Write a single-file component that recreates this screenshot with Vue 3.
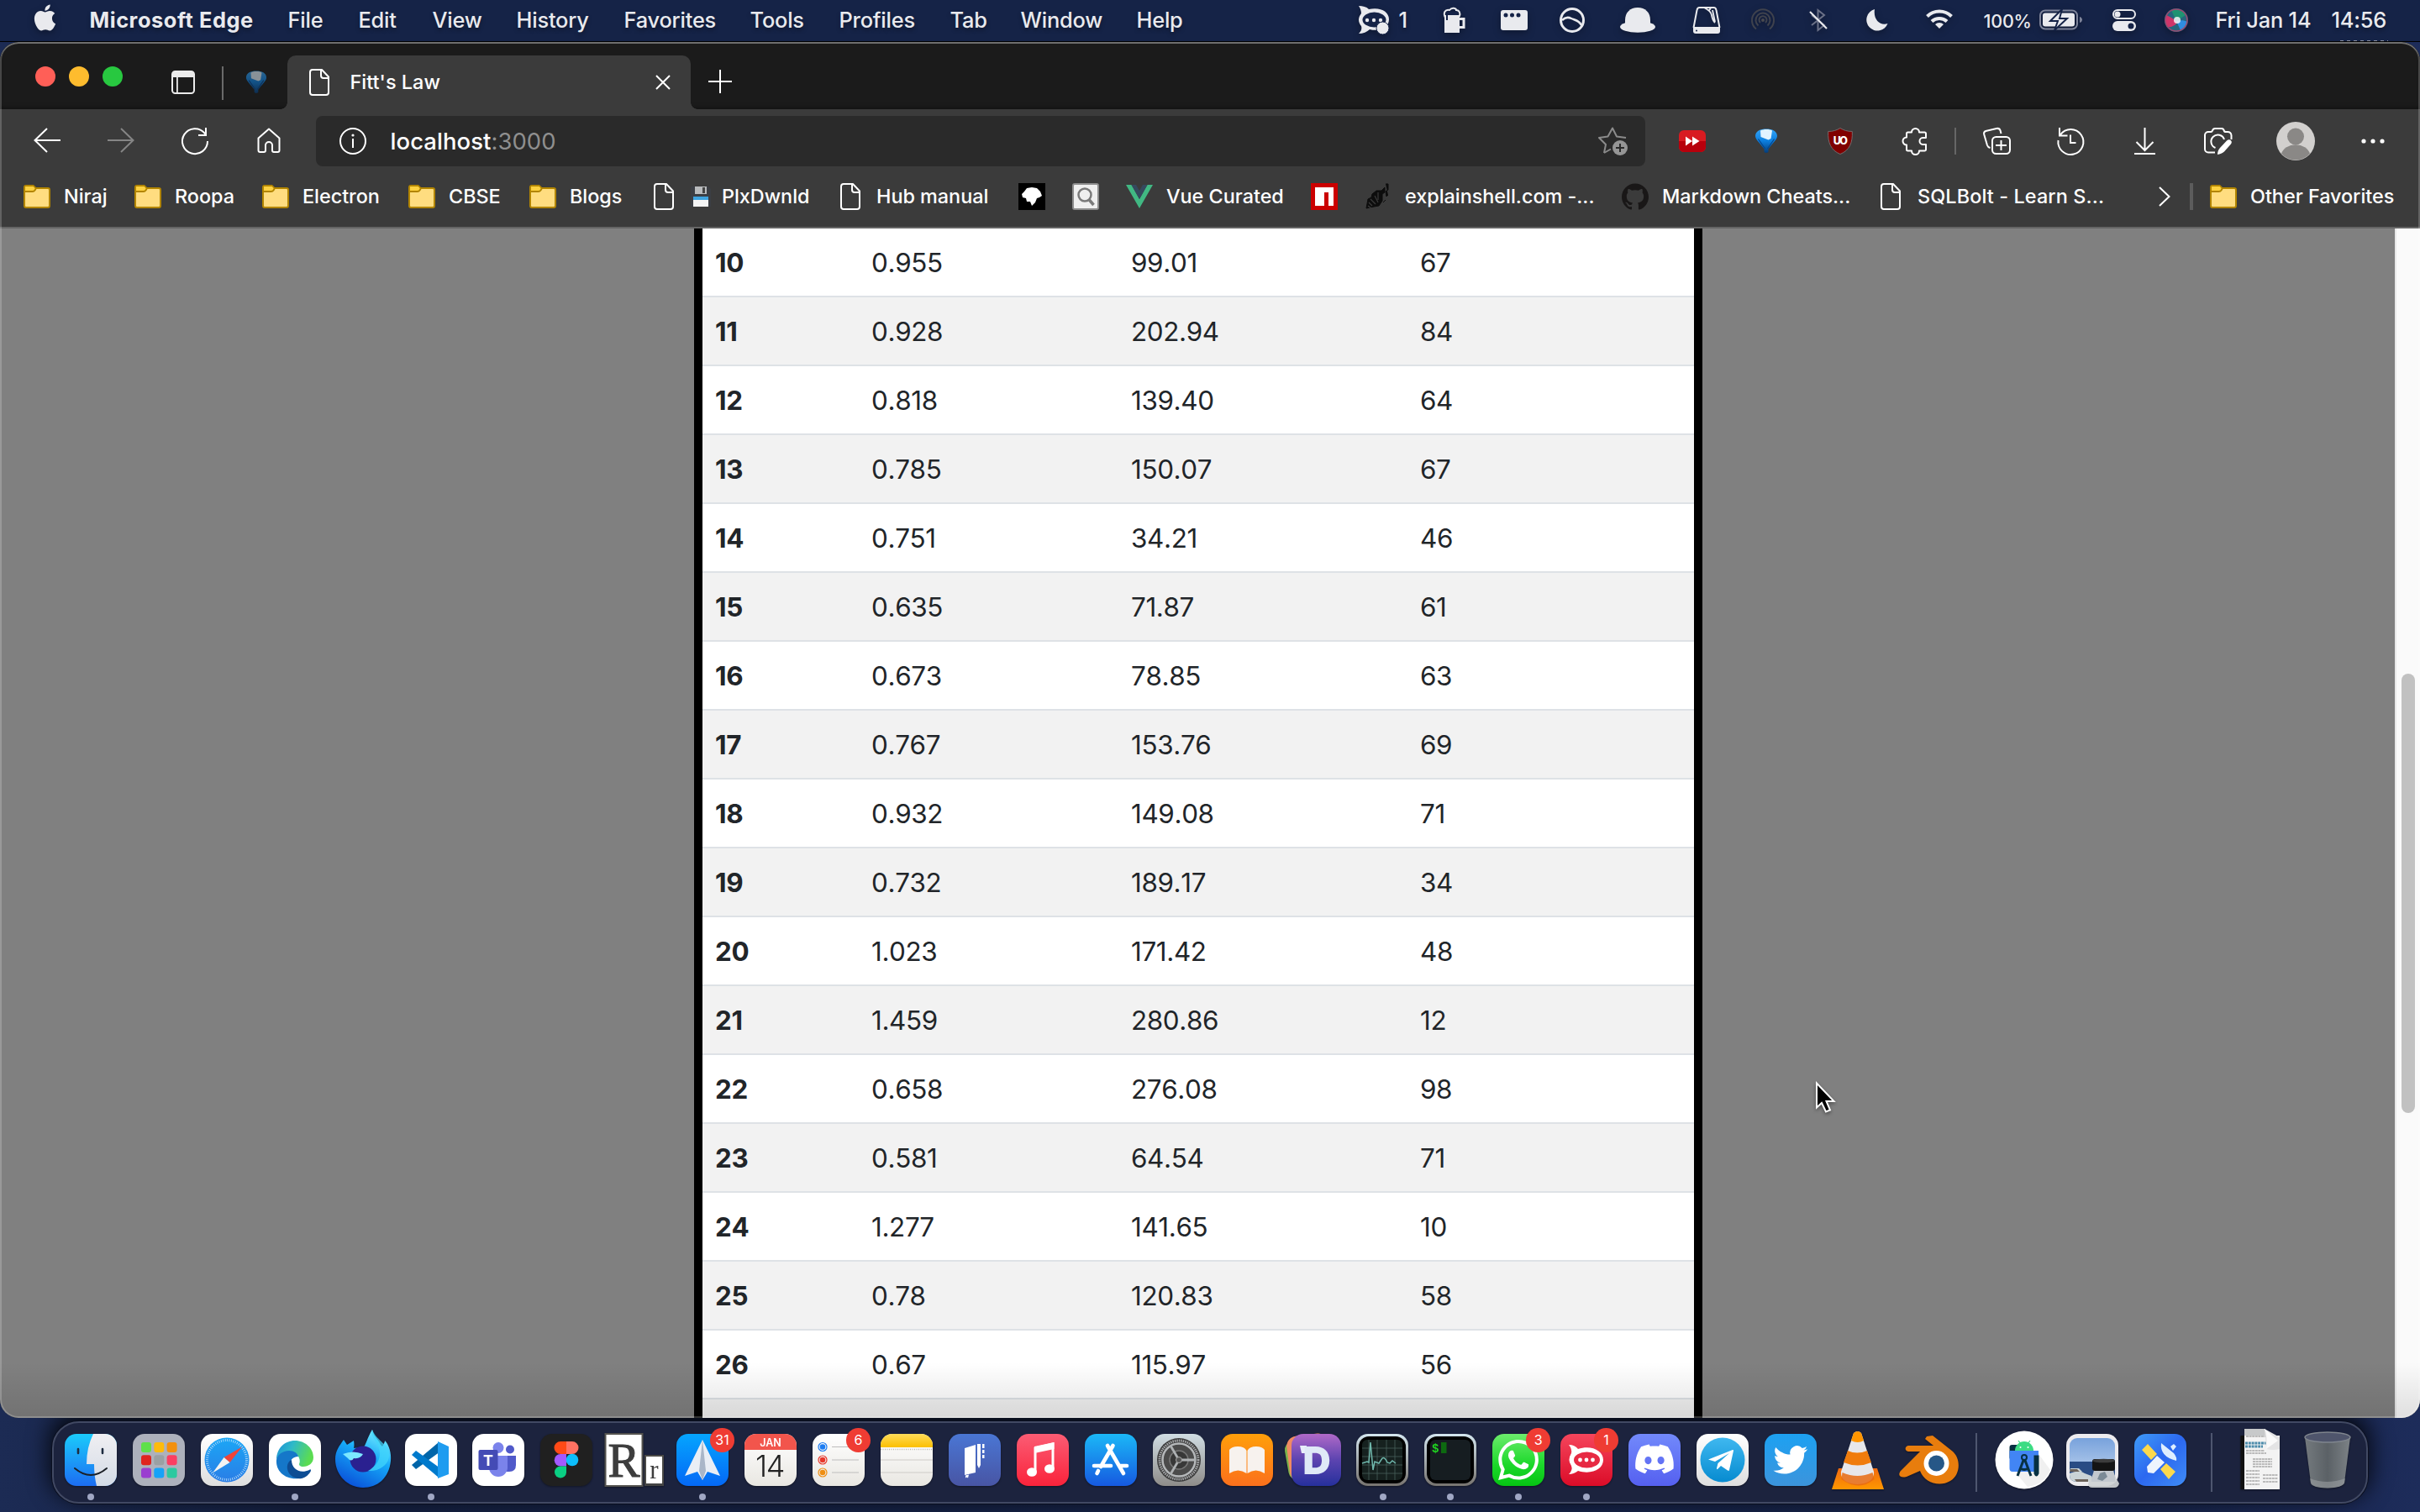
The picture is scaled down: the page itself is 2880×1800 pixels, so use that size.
<script setup>
const menus = ['Microsoft Edge', 'File', 'Edit', 'View', 'History', 'Favorites', 'Tools', 'Profiles', 'Tab', 'Window', 'Help']

const rows = [
  [10, '0.955', '99.01', 67],
  [11, '0.928', '202.94', 84],
  [12, '0.818', '139.40', 64],
  [13, '0.785', '150.07', 67],
  [14, '0.751', '34.21', 46],
  [15, '0.635', '71.87', 61],
  [16, '0.673', '78.85', 63],
  [17, '0.767', '153.76', 69],
  [18, '0.932', '149.08', 71],
  [19, '0.732', '189.17', 34],
  [20, '1.023', '171.42', 48],
  [21, '1.459', '280.86', 12],
  [22, '0.658', '276.08', 98],
  [23, '0.581', '64.54', 71],
  [24, '1.277', '141.65', 10],
  [25, '0.78', '120.83', 58],
  [26, '0.67', '115.97', 56],
]

const folders = ['Niraj', 'Roopa', 'Electron', 'CBSE', 'Blogs']
const launchpad = ['#5fe04a', '#fdbb0c', '#f3900d', '#e0241f', '#9aa0a3', '#fb3f62', '#9a3fd0', '#16a2f8', '#2cc9a0']
</script>

<template>
  <div class="desktop">
    <svg class="defs" width="0" height="0">
      <defs>
        <linearGradient id="balloon" x1="0" y1="0" x2="0" y2="1"><stop offset="0" stop-color="#35a4f5" /><stop offset=".5" stop-color="#0c7fe0" /><stop offset="1" stop-color="#053c78" /></linearGradient>
        <symbol id="i-doc" viewBox="0 0 24 32"><path d="M4 1h11l8 8.500v18.500a3 3 0 0 1-3 3H4a3 3 0 0 1-3-3V4a3 3 0 0 1 3-3zM14 1v7a3 3 0 0 0 3 3h6" fill="none" stroke="#fff" stroke-width="2" stroke-linejoin="round" /></symbol>
        <symbol id="i-folder" viewBox="0 0 32 28">
          <path d="M1 6V3a2 2 0 0 1 2-2h8.500l3 3H29a2 2 0 0 1 2 2v19a2 2 0 0 1-2 2H3a2 2 0 0 1-2-2z" fill="#ffdd80" stroke="#b28500" stroke-width="2" />
          <path d="M2 2h9.500l2.500 2.500L11.500 8H2z" fill="#fdd140" />
          <path d="M2 8h8.500q2 0 3-1.500L15 4" fill="none" stroke="#b28500" stroke-width="2" />
        </symbol>
        <symbol id="i-balloon" viewBox="0 0 28 30">
          <path d="M1 9C1 3 7 .5 14 .5S27 3 27 9c0 4-6 9-10.500 15.500V28q-2.500 2-5 0v-3.500C7 18 1 13 1 9z" fill="url(#balloon)" />
          <path d="M7 2.500C11 .5 18 .5 21 2.500L19.500 12l-3 1.500L7.500 10z" fill="#e2f3ff" />
          <path d="M4.500 12.500l8 11.500M23.500 12.500l-8 11.500" stroke="#06468c" stroke-width="1.200" fill="none" />
        </symbol>
        <linearGradient id="g-finder" x1="0" y1="0" x2="0" y2="1"><stop offset="0" stop-color="#1bcbfb" /><stop offset="1" stop-color="#1c6df2" /></linearGradient>
        <linearGradient id="g-face" x1="0" y1="0" x2="0" y2="1"><stop offset="0" stop-color="#f0eff2" /><stop offset="1" stop-color="#d3dbe6" /></linearGradient>
        <linearGradient id="g-white" x1="0" y1="0" x2="0" y2="1"><stop offset="0" stop-color="#fff" /><stop offset="1" stop-color="#dedede" /></linearGradient>
        <linearGradient id="g-safari" x1="0" y1="0" x2="0" y2="1"><stop offset="0" stop-color="#1ba7f6" /><stop offset="1" stop-color="#2a7de6" /></linearGradient>
        <linearGradient id="g-edge" x1="0" y1="0" x2="1" y2=".3"><stop offset="0" stop-color="#1b8fd6" /><stop offset=".45" stop-color="#2fb9c8" /><stop offset="1" stop-color="#5bdc52" /></linearGradient>
        <linearGradient id="g-fox" x1="0.800" y1="0" x2=".3" y2="1"><stop offset="0" stop-color="#7ff3ff" /><stop offset=".45" stop-color="#15a8f8" /><stop offset="1" stop-color="#0a50d8" /></linearGradient>
        <linearGradient id="g-spark" x1="0" y1="0" x2="0" y2="1"><stop offset="0" stop-color="#05a5ff" /><stop offset="1" stop-color="#0468f5" /></linearGradient>
        <linearGradient id="g-notes" x1="0" y1="0" x2="0" y2="1"><stop offset="0" stop-color="#ffdc5a" /><stop offset="1" stop-color="#fbbf00" /></linearGradient>
        <linearGradient id="g-paper" x1="0" y1="0" x2="0" y2="1"><stop offset="0" stop-color="#fff" /><stop offset="1" stop-color="#e9e7e2" /></linearGradient>
        <linearGradient id="g-indigo" x1="0" y1="0" x2="0" y2="1"><stop offset="0" stop-color="#4a76d4" /><stop offset="1" stop-color="#4855a4" /></linearGradient>
        <linearGradient id="g-music" x1="0" y1="0" x2="0" y2="1"><stop offset="0" stop-color="#fb5c74" /><stop offset="1" stop-color="#fa233b" /></linearGradient>
        <linearGradient id="g-store" x1="0" y1="0" x2="0" y2="1"><stop offset="0" stop-color="#1bb8f7" /><stop offset="1" stop-color="#1659e0" /></linearGradient>
        <linearGradient id="g-prefs" x1="0" y1="0" x2="0" y2="1"><stop offset="0" stop-color="#d0dde3" /><stop offset="1" stop-color="#8e8c89" /></linearGradient>
        <linearGradient id="g-books" x1="0" y1="0" x2="0" y2="1"><stop offset="0" stop-color="#ff9f0a" /><stop offset="1" stop-color="#fb701c" /></linearGradient>
        <linearGradient id="g-dash" x1="0" y1="0" x2="0" y2="1"><stop offset="0" stop-color="#b069c8" /><stop offset=".5" stop-color="#5c44b0" /><stop offset="1" stop-color="#26309c" /></linearGradient>
        <linearGradient id="g-rim" x1="0" y1="0" x2="0" y2="1"><stop offset="0" stop-color="#d3e5ee" /><stop offset="1" stop-color="#77736f" /></linearGradient>
        <linearGradient id="g-wa" x1="0" y1="0" x2="0" y2="1"><stop offset="0" stop-color="#6cec6c" /><stop offset=".6" stop-color="#1bd82a" /><stop offset="1" stop-color="#06c413" /></linearGradient>
        <linearGradient id="g-rocket" x1="0" y1="0" x2="0" y2="1"><stop offset="0" stop-color="#f5455c" /><stop offset="1" stop-color="#db0c28" /></linearGradient>
        <linearGradient id="g-discord" x1="0" y1="0" x2="0" y2="1"><stop offset="0" stop-color="#7289fb" /><stop offset="1" stop-color="#5560f0" /></linearGradient>
        <linearGradient id="g-tele" x1="0" y1="0" x2="0" y2="1"><stop offset="0" stop-color="#3fb8f0" /><stop offset="1" stop-color="#078bd0" /></linearGradient>
        <linearGradient id="g-twit" x1="0" y1="0" x2="0" y2="1"><stop offset="0" stop-color="#1da1f2" /><stop offset="1" stop-color="#3c94dc" /></linearGradient>
        <linearGradient id="g-cone" x1="0" y1="0" x2="0" y2="1"><stop offset="0" stop-color="#f06a10" /><stop offset="1" stop-color="#ff9700" /></linearGradient>
        <linearGradient id="g-sky" x1="0" y1="0" x2="0" y2="1"><stop offset="0" stop-color="#78a2dc" /><stop offset="1" stop-color="#c5d8f0" /></linearGradient>
        <linearGradient id="g-clean" x1="0" y1="0" x2="1" y2="1"><stop offset="0" stop-color="#3f9cf8" /><stop offset=".5" stop-color="#2c68f0" /><stop offset="1" stop-color="#3f8cf5" /></linearGradient>
        <linearGradient id="g-bin" x1="0" y1="0" x2="1" y2="0"><stop offset="0" stop-color="#747a7e" /><stop offset=".5" stop-color="#5b6166" /><stop offset="1" stop-color="#7c8286" /></linearGradient>
      </defs>
    </svg>

    <header class="menubar">
      <svg class="apple" width="31" height="32" viewBox="0 0 24 24"><path fill="#e9eaee" d="M12.152 6.896c-.948 0-2.415-1.078-3.960-1.040-2.040.027-3.910 1.183-4.961 3.014-2.117 3.675-.546 9.103 1.519 12.090 1.013 1.454 2.208 3.090 3.792 3.039 1.520-.065 2.090-.987 3.935-.987 1.831 0 2.350.987 3.960.948 1.637-.026 2.676-1.480 3.676-2.948 1.156-1.688 1.636-3.325 1.662-3.415-.039-.013-3.182-1.221-3.220-4.857-.026-3.040 2.480-4.494 2.597-4.559-1.429-2.090-3.623-2.324-4.390-2.376-2-.156-3.675 1.090-4.610 1.090zM15.530 3.830c.843-1.012 1.400-2.427 1.245-3.830-1.207.052-2.662.805-3.532 1.818-.780.896-1.454 2.338-1.273 3.714 1.338.104 2.715-.688 3.559-1.701" /></svg>
      <span v-for="(m, i) in menus" :key="m" class="menu" :class="{ strong: i === 0 }">{{ m }}</span>
      <svg width="38" height="34" viewBox="0 0 38 34"><path d="M0 0c5 0 9 1 12 4 14-3 24 3 24 12 0 10-11 15-23 12-3 3-8 5-13 5 3-3 4-6 3-9-4-5-4-10 0-15C3 6 2 3 0 0z" fill="#e9eaee" /><ellipse cx="18.500" cy="16.500" rx="14" ry="9" fill="#152347" /><circle cx="10" cy="17" r="2.200" fill="#e9eaee" /><circle cx="18" cy="17" r="2.200" fill="#e9eaee" /><circle cx="26" cy="17" r="2.200" fill="#e9eaee" /><circle cx="28.500" cy="26.500" r="7.500" fill="#e9eaee" stroke="#152347" stroke-width="1" /></svg>
      <span class="menu">1</span>
      <svg width="26" height="30" viewBox="0 0 26 30"><path d="M1 9h18v21H1z" fill="#e9eaee" /><path d="M2 12C-1 6 2 2 7 3c3-4 8-2 8 0 4 0 5 4 4 7H6z" fill="none" stroke="#e9eaee" stroke-width="2" /><path d="M3 5h14v4H5v6H3z" fill="#152347" /><path d="M19 13.500h5v10h-5" fill="none" stroke="#e9eaee" stroke-width="3" /></svg>
      <svg width="32" height="24" viewBox="0 0 32 24"><rect width="32" height="24" rx="3" fill="#e9eaee" /><circle cx="6" cy="6" r="2.500" fill="#152347" /><circle cx="13.500" cy="6" r="2.500" fill="#152347" /><circle cx="21" cy="6" r="2.500" fill="#152347" /></svg>
      <svg width="30" height="30" viewBox="0 0 30 30" fill="none" stroke="#e9eaee"><circle cx="15" cy="15" r="13.500" stroke-width="3" /><path d="M3 15c3-3 7-4 11-2s9 2 12 8" stroke-width="2.500" /></svg>
      <svg width="42" height="30" viewBox="0 0 42 30" fill="#e9eaee"><path d="M6 22V15C6 6 12 0 21 0s15 6 15 15v7z" /><ellipse cx="21" cy="23" rx="21" ry="6.800" /></svg>
      <svg width="34" height="32" viewBox="0 0 34 32" fill="none" stroke="#e9eaee"><path d="M1.500 25L5.500 4q.5-3 3-3h17q2.500 0 3 3l4 21" stroke-width="2" /><path d="M1 24h32v5a3 3 0 0 1-3 3H4a3 3 0 0 1-3-3z" fill="#e9eaee" stroke="none" /><path d="M14 1q8 4 9 9 1 6 4 9M24 4l3 14M19 5l3-3" stroke-width="1.800" /><circle cx="5" cy="28.500" r="1" fill="#152347" stroke="none" /></svg>
      <svg width="28" height="28" viewBox="0 0 28 28" fill="none" stroke="#3f424d" stroke-width="2"><path d="M6 24.500A13 13 0 1 1 22 24.500M8.500 20.500a8.500 8.500 0 1 1 11 0M11 17a4.500 4.500 0 1 1 6 0" /><circle cx="14" cy="14" r="2" fill="#4a4a50" stroke="none" /></svg>
      <svg width="22" height="28" viewBox="0 0 22 28" fill="none"><path d="M2 8l15 12-7.500 6V2L17 8 2 20" stroke="#6c7288" stroke-width="2" /><path d="M0 4l20 20" stroke="#e9eaee" stroke-width="2.200" /></svg>
      <svg width="26" height="26" viewBox="0 0 26 26"><path d="M10 0A13 13 0 1 0 25.500 17C17 20 8 13 10 0z" fill="#e9eaee" /></svg>
      <svg class="up" width="32" height="25" viewBox="0 0 32 25" fill="none" stroke="#e9eaee" stroke-width="4"><path d="M1.500 9.500a20.500 20.500 0 0 1 29 0M7 15.500a13 13 0 0 1 18 0" /><path d="M16 24l5-5a7 7 0 0 0-10 0z" fill="#e9eaee" stroke="none" /></svg>
      <span class="menu small">100%</span>
      <svg width="52" height="26" viewBox="0 0 52 26"><rect x="1" y="1.500" width="44" height="22" rx="6" fill="none" stroke="#7d8399" stroke-width="2" /><rect x="4" y="4.500" width="38" height="16" rx="3" fill="#e9eaee" /><path d="M48 9c4 1 4 6 0 7z" fill="#7d8399" /><path d="M27 0L13 14h9l-4 11 15-14h-9z" fill="#e9eaee" stroke="#152347" stroke-width="2" /></svg>
      <svg width="28" height="26" viewBox="0 0 28 26"><rect x="1" y="1" width="26" height="10" rx="5" fill="none" stroke="#e9eaee" stroke-width="2" /><circle cx="6" cy="6" r="3.500" fill="#e9eaee" /><rect y="14" width="28" height="12" rx="6" fill="#e9eaee" /><circle cx="22" cy="20" r="3.500" fill="#152347" /></svg>
      <svg width="28" height="28" viewBox="0 0 28 28"><circle cx="14" cy="14" r="14" fill="#27667e" /><path d="M2 8c5 2 10 5 13 9-3 4-8 6-12 5A14 14 0 0 1 2 8z" fill="#d0356a" /><path d="M8 2c6-2 14 0 17 6-4 3-8 5-12 5z" fill="#1f9372" /><path d="M14 15c5-1 10-1 13 1-1 4-4 8-8 10z" fill="#2f8de0" /><circle cx="15" cy="14" r="4" fill="#fff" opacity=".8" /><circle cx="14" cy="14" r="13" fill="none" stroke="#9a4a70" stroke-width="1.500" /></svg>
      <span class="menu">Fri Jan 14</span>
      <span class="menu">14:56</span>
    </header>

    <main class="window">
      <div class="tabstrip">
        <div class="lights"><i class="red"></i><i class="amber"></i><i class="green"></i></div>
        <svg class="panel" width="28" height="28" viewBox="0 0 28 28"><rect x="1" y="1" width="26" height="26" rx="3.500" fill="none" stroke="#ebebeb" stroke-width="2" /><path d="M1 2h26v6H1zM6 8h1.800v19H6z" fill="#ebebeb" /></svg>
        <i class="rule"></i>
        <svg class="dim" width="26" height="28"><use href="#i-balloon" /></svg>
        <div class="tab">
          <svg width="24" height="32"><use href="#i-doc" /></svg>
          <span class="title">Fitt's Law</span>
          <svg width="18" height="18" viewBox="0 0 18 18"><path d="M1 1l16 16M17 1L1 17" stroke="#fff" stroke-width="2" /></svg>
        </div>
        <svg class="plus" width="28" height="28" viewBox="0 0 28 28"><path d="M14 0v28M0 14h28" stroke="#fff" stroke-width="2" /></svg>
      </div>

      <div class="toolbar">
        <svg width="32" height="32" viewBox="0 0 32 32" fill="none" stroke="#fff" stroke-width="2"><path d="M32 15H1.500M16 1L1.500 15 16 29" /></svg>
        <svg width="32" height="32" viewBox="0 0 32 32" fill="none" stroke="#858585" stroke-width="2"><path d="M0 15h30.500M16 1l14.500 14L16 29" /></svg>
        <svg width="32" height="32" viewBox="0 0 32 32" fill="none" stroke="#fff" stroke-width="2"><path d="M31 16A15 15 0 1 1 27.500 6.500L29 9M29 0v9h-9" /></svg>
        <svg width="28" height="32" viewBox="0 0 28 32" fill="none" stroke="#fff" stroke-width="2"><path d="M14 1.500L1.500 12.500V27a2 2 0 0 0 2 2H8q2 0 2-2v-6a4 4 0 0 1 8 0v6q0 2 2 2h4.500a2 2 0 0 0 2-2V12.500z" stroke-linejoin="round" /></svg>
        <div class="address">
          <svg width="32" height="32" viewBox="0 0 32 32" fill="none" stroke="#fff" stroke-width="2"><circle cx="16" cy="16" r="15" /><path d="M16 13v11" /><circle cx="16" cy="9" r="1.600" fill="#fff" stroke="none" /></svg>
          <span class="url">localhost<em>:3000</em></span>
          <svg width="36" height="34" viewBox="0 0 36 34"><path d="M7 31l2-10-8-8 10.500-1.500L17 1.500l5 10L33 13" fill="none" stroke="#8b8b8b" stroke-width="2" stroke-linejoin="round" /><path d="M7 31l8-4.500" stroke="#8b8b8b" stroke-width="2" /><circle cx="26" cy="25" r="9" fill="#959595" /><path d="M26 20v10M21 25h10" stroke="#2a2a2a" stroke-width="2" /></svg>
        </div>
        <svg width="32" height="26" viewBox="0 0 32 26"><rect width="32" height="26" rx="6" fill="#d81b21" /><path d="M0 13h32v7a6 6 0 0 1-6 6H6a6 6 0 0 1-6-6z" fill="#b8000c" /><path d="M8 7.500l8 5.500-8 5.500zM16 7.500l8.500 5.500-8.500 5.500z" fill="#fff" /></svg>
        <svg width="28" height="30"><use href="#i-balloon" /></svg>
        <svg width="30" height="32" viewBox="0 0 30 32"><path d="M15 .5c4 2.500 8.500 4 14.300 4C30 18 26 27 15 31.500 4 27 0 18 .7 4.500 6.500 4.500 11 3 15 .5z" fill="#800000" stroke="#75686a" stroke-width="1" /><text x="14.500" y="20" text-anchor="middle" font-size="12.500" font-weight="800" font-family="Inter, sans-serif" fill="#fff" letter-spacing="-1.500">UO</text></svg>
        <svg width="30" height="32" viewBox="0 0 30 32" fill="none" stroke="#fff" stroke-width="2" stroke-linejoin="round"><path d="M6.500 5.500H11a4.500 4.500 0 0 1 9 0h6.500a1.500 1.500 0 0 1 1.500 1.500v5h-3.500a4 4 0 0 0 0 8H28v6a1.500 1.500 0 0 1-1.500 1.500H20a4.500 4.500 0 0 1-9 0H6.500A1.500 1.500 0 0 1 5 26v-5.500a4.500 4.500 0 0 1 0-9V7a1.500 1.500 0 0 1 1.500-1.500z" /></svg>
        <i class="sep"></i>
        <svg width="33" height="32" viewBox="0 0 33 32" fill="none" stroke="#fff" stroke-width="2"><rect x="11" y="11" width="21" height="20" rx="4.500" /><path d="M21.500 15v12M15 21h13" /><path d="M8.500 24c-2-.5-3-1.500-3.500-3L1.200 8c-.5-2 .5-3.500 2-4L16 1c2.500-.5 4 .5 4.600 2.500L21.500 7" /></svg>
        <svg width="33" height="32" viewBox="0 0 33 32" fill="none" stroke="#fff" stroke-width="2"><path d="M1.500 15A15 15 0 1 0 4 8.500L3 10M3 0v9.500h9.500M16 8.500V18h6.500" /></svg>
        <svg width="25" height="32" viewBox="0 0 25 32" fill="none" stroke="#fff" stroke-width="2"><path d="M12.500 0v26M2.500 17l10 10 10-10M0 31h25" /></svg>
        <svg width="34" height="32" viewBox="0 0 34 32" fill="none" stroke="#fff" stroke-width="2"><path d="M13 29.500H5a4 4 0 0 1-4-4V9a4 4 0 0 1 4-4h3q1.500 0 2-1.500Q10.800 1 13 1h8q2 0 2.800 2.500Q24 5 26 5h2q4 0 4.500 4v5M13.500 24a8 8 0 1 1 10.500-10" /><path d="M31 14.500c2 1 2.500 3 1 5l-8 9c-2 2-5 3-8 3.500 0-3 1-6 3-8l8-8.500q2-2 4-1z" fill="#fff" stroke="none" /></svg>
        <svg width="46" height="46" viewBox="0 0 46 46"><circle cx="23" cy="23" r="23" fill="#d2d0ce" /><circle cx="23" cy="17.500" r="10" fill="#8a8886" /><path d="M6 38a17.500 14 0 0 1 34 0 23 23 0 0 1-34 0z" fill="#8a8886" /></svg>
        <svg width="28" height="6" viewBox="0 0 28 6" fill="#fff"><circle cx="3" cy="3" r="2.600" /><circle cx="14" cy="3" r="2.600" /><circle cx="25" cy="3" r="2.600" /></svg>
      </div>

      <nav class="bookmarks">
        <template v-for="f in folders" :key="f"><svg width="32" height="28"><use href="#i-folder" /></svg><span>{{ f }}</span></template>
        <svg width="24" height="32"><use href="#i-doc" /></svg>
        <svg width="24" height="24" viewBox="0 0 24 24"><path d="M1 0h20l3 3v21H0V1z" fill="#3b3e44" /><path d="M5 0h14v9H5z" fill="#b9bbbd" /><path d="M14 1h3v7h-3z" fill="#444" /><path d="M3 12h18v4H3z" fill="#3fa4e0" /><path d="M3 16h18v8H3z" fill="#f4f4f4" /></svg>
        <span>PlxDwnld</span>
        <svg width="24" height="32"><use href="#i-doc" /></svg><span>Hub manual</span>
        <svg width="32" height="32" viewBox="0 0 32 32"><path d="M0 0h32v32H0z" fill="#000" /><path d="M4 13l3-3 3-4 6-1 6 1 4 4 2 5-3 2-3 1-2 5-4 4-2-5-4 0-1-4-4-1z" fill="#fff" /></svg>
        <svg width="32" height="32" viewBox="0 0 32 32"><rect x="1" y="1" width="30" height="30" rx="2" fill="#efefef" stroke="#8d8d8d" stroke-width="2" /><circle cx="15" cy="14" r="7.500" fill="none" stroke="#7a7a7a" stroke-width="2.500" /><path d="M19.500 19l6 7" stroke="#7a7a7a" stroke-width="3.500" /></svg>
        <svg width="32" height="28" viewBox="0 0 32 28"><path d="M0 0h6.500L16 17 25.500 0H32L16 28z" fill="#41b883" /><path d="M6.500 0H12l4 7 4-7h5.500L16 17z" fill="#35495e" /></svg>
        <span>Vue Curated</span>
        <svg width="32" height="32" viewBox="0 0 32 32"><path d="M0 0h32v32H0z" fill="#cb0000" /><path d="M5 5h22v22h-6V11h-5v16H5z" fill="#fff" /></svg>
        <svg width="27" height="30" viewBox="0 0 27 30"><path d="M23 0h3v7l-3 2 1 6 2-2M0 29l2-11 4-2 1-4 5-4h6l4-4v6l-3 2v8l-4 6-6 1zM20 22l3-3" fill="#0d0d0d" stroke="#0d0d0d" /><path d="M3 22l4 4M5 18l6 6M10 14l4 8M14 10v9M2 26l4 3" stroke="#3b3b3b" stroke-width="1.200" /></svg>
        <span>explainshell.com -...</span>
        <svg width="32" height="32" viewBox="0 0 24 24"><path fill="#191717" d="M12 .297c-6.630 0-12 5.373-12 12 0 5.303 3.438 9.800 8.205 11.385.600.113.820-.258.820-.577 0-.285-.010-1.040-.015-2.040-3.338.724-4.042-1.610-4.042-1.610C4.422 18.070 3.633 17.700 3.633 17.700c-1.087-.744.084-.729.084-.729 1.205.084 1.838 1.236 1.838 1.236 1.070 1.835 2.809 1.305 3.495.998.108-.776.417-1.305.760-1.605-2.665-.300-5.466-1.332-5.466-5.930 0-1.310.465-2.380 1.235-3.220-.135-.303-.540-1.523.105-3.176 0 0 1.005-.322 3.300 1.230.960-.267 1.980-.399 3-.405 1.020.006 2.040.138 3 .405 2.280-1.552 3.285-1.230 3.285-1.230.645 1.653.240 2.873.120 3.176.765.840 1.230 1.910 1.230 3.220 0 4.610-2.805 5.625-5.475 5.920.420.360.810 1.096.810 2.220 0 1.606-.015 2.896-.015 3.286 0 .315.210.690.825.570C20.565 22.092 24 17.592 24 12.297c0-6.627-5.373-12-12-12" /></svg>
        <span>Markdown Cheats...</span>
        <svg width="24" height="32"><use href="#i-doc" /></svg><span class="loose">SQLBolt - Learn S...</span>
        <svg width="14" height="24" viewBox="0 0 14 24"><path d="M1 1l11.500 11L1 23" fill="none" stroke="#fff" stroke-width="2" /></svg>
        <i class="rule"></i>
        <svg width="32" height="28"><use href="#i-folder" /></svg><span>Other Favorites</span>
      </nav>

      <section class="page">
        <div class="sheet">
          <table>
            <colgroup><col class="c1" /><col class="c2" /><col class="c3" /><col /></colgroup>
            <tbody>
              <tr v-for="r in rows" :key="r[0]"><th>{{ r[0] }}</th><td>{{ r[1] }}</td><td>{{ r[2] }}</td><td>{{ r[3] }}</td></tr>
              <tr><td></td><td></td><td></td><td></td></tr>
            </tbody>
          </table>
        </div>
        <div class="track"><i class="thumb"></i></div>
        <svg class="pointer" width="28" height="40" viewBox="0 0 28 40"><path d="M2 1.500v29l6-5.500 5 10.500 5-2-4.500-10.500h9z" fill="#000" stroke="#fff" stroke-width="2" /></svg>
      </section>
    </main>

    <footer class="dock">
      <div class="app on"><svg viewBox="0 0 62 62"><rect width="62" height="62" rx="14" fill="url(#g-finder)" /><path d="M34 0h14a14 14 0 0 1 14 14v34a14 14 0 0 1-14 14H38q-3-12-3-26h-9Q26 16 34 0z" fill="url(#g-face)" /><path d="M16 18v5M45 18v5" stroke="#1e2c40" stroke-width="2.600" stroke-linecap="round" /><path d="M12 41q19 16 38 0" fill="none" stroke="#1b2027" stroke-width="2" stroke-linecap="round" /></svg></div>
      <div class="app"><svg viewBox="0 0 62 62"><rect width="62" height="62" rx="14" fill="#adb1bc" /><rect v-for="(c, i) in launchpad" :key="c" :x="10 + (i % 3) * 15.3" :y="10 + Math.floor(i / 3) * 15.3" width="12" height="12" rx="3" :fill="c" /></svg></div>
      <div class="app"><svg viewBox="0 0 62 62"><rect width="62" height="62" rx="14" fill="url(#g-white)" /><circle cx="31" cy="31" r="26.500" fill="url(#g-safari)" /><circle cx="31" cy="31" r="23.500" fill="none" stroke="#bfe0fa" stroke-width="3" stroke-dasharray=".8 1.650" /><path d="M49 15.500L34.500 34l-7-6z" fill="#f1443a" /><path d="M14 46.500L27.500 28l7 6z" fill="#f3f3f3" /></svg></div>
      <div class="app on"><svg viewBox="0 0 62 62"><rect width="62" height="62" rx="14" fill="#fff" /><path d="M9 31C9 17 19 8 31 8s22 9 22 20c0 7-6 11-12 11-4 0-6-2-4.500-4.500C38 30 34 21 24 21 16 21 10 26 9 31z" fill="url(#g-edge)" /><path d="M9 31c1-6 7-11 15-11 6 0 10 3 11 7-7 0-11 5-10 12 1 6 5 12 11 14C20 55 8 45 9 31z" fill="#1577c9" /><path d="M25 32c-8 8 0 23 14 21 5-1 9-5 11-9 0-2-1-2-2-1-11 5-21-1-21-12z" fill="#0d4d94" /></svg></div>
      <div class="app"><svg viewBox="0 0 62 62"><path d="M-2 30C-2 20 3 14 8 7l4 6 8-5q1 6 0 9c8-1 8 2 8 4C34 16 36 4 42-5c2 9 7 11 10 18l2 2q3-5 3-7c5 5 8 15 7 24C62 53 48 64 31 64S-2 50-2 30z" fill="url(#g-fox)" /><circle cx="31" cy="30" r="15.500" fill="#2a2090" /><path d="M7 24q12-5 24 0-3 6-11 5-3 5-7 0z" fill="#7ce7ff" /><path d="M42-5c-4 10 10 15 9 30-1 9-7 15-14 19 12 1 23-6 25-16C65 13 47 9 42-5z" fill="#42d5fb" opacity=".75" /></svg></div>
      <div class="app on"><svg viewBox="0 0 62 62"><rect width="62" height="62" rx="14" fill="#fff" /><path d="M40 10L8 37l5 5L42 21z" fill="#0065a9" /><path d="M40 52L8 25l5-5 29 21z" fill="#007acc" /><path d="M39 53V9l13 6v33z" fill="#1f9cf0" /></svg></div>
      <div class="app"><svg viewBox="0 0 62 62"><rect width="62" height="62" rx="14" fill="#fff" /><circle cx="45" cy="18.500" r="5" fill="#5059c9" /><circle cx="31" cy="16.500" r="6.500" fill="#7b83eb" /><path d="M42 26h10v11q0 8-8 8h-4z" fill="#5059c9" /><path d="M20 26h22v14a11 11 0 0 1-22 0z" fill="#7b83eb" /><rect x="7.500" y="19" width="23" height="24" rx="2" fill="#444bb5" /><text x="19" y="37.500" text-anchor="middle" font-size="18" font-weight="700" font-family="Inter, sans-serif" fill="#fff">T</text></svg></div>
      <div class="app"><svg viewBox="0 0 62 62"><rect width="62" height="62" rx="14" fill="#202020" /><path d="M31 9h-7a7 7 0 0 0 0 15h7z" fill="#ff4a16" /><path d="M31 9h7a7 7 0 0 1 0 15h-7z" fill="#ff7262" /><path d="M31 24h-7a7 7 0 0 0 0 14.500h7z" fill="#a259ff" /><circle cx="38" cy="31" r="7.300" fill="#0cbefc" /><path d="M31 38.500h-7A7 7 0 1 0 31 46z" fill="#0acf83" /></svg></div>
      <div class="app"><svg viewBox="0 0 62 62"><rect x="-3.500" y="0" width="44" height="62" fill="#fff" stroke="#54534f" stroke-width="2" /><rect x="44" y="26" width="21" height="35" fill="#fff" stroke="#4b4a47" stroke-width="2" /><path d="M43 59h23v3H43z" fill="#444" /><text x="18.500" y="51" text-anchor="middle" font-size="57" font-family="'Liberation Serif', serif" fill="#3d3d3d" textLength="38" lengthAdjust="spacingAndGlyphs" stroke="#3d3d3d">R</text><text x="54.500" y="53" text-anchor="middle" font-size="31" font-family="'Liberation Serif', serif" fill="#3d3d3d">r</text></svg></div>
      <div class="app on"><svg viewBox="0 0 62 62"><rect width="62" height="62" rx="14" fill="url(#g-spark)" /><path d="M31 7l21 43-15-5-6 10-6-10-15 5z" fill="#e9eef5" /><path d="M31 7l4 37-4 11-4-11z" fill="#a9b6c8" /></svg><b class="badge">31</b></div>
      <div class="app"><svg viewBox="0 0 62 62"><rect width="62" height="62" rx="14" fill="url(#g-paper)" /><path d="M0 19v-5A14 14 0 0 1 14 0h34a14 14 0 0 1 14 14v5z" fill="#f2554c" /><text x="31" y="15" text-anchor="middle" font-size="12.500" font-weight="600" font-family="Inter, sans-serif" fill="#fff">JAN</text><text x="30" y="51" text-anchor="middle" font-size="36" font-weight="300" font-family="Inter, sans-serif" fill="#222" letter-spacing="-1.500">14</text></svg></div>
      <div class="app"><svg viewBox="0 0 62 62"><rect width="62" height="62" rx="14" fill="url(#g-paper)" /><path d="M23 15.500h32M23 31h32M23 46h32" stroke="#bdbdbd" stroke-width="1.200" /><g fill="none" stroke-width="1.200"><circle cx="12" cy="15.500" r="5" stroke="#1c7cf2" /><circle cx="12" cy="31" r="5" stroke="#e8382c" /><circle cx="12" cy="46" r="5" stroke="#ef8e12" /></g><circle cx="12" cy="15.500" r="3.300" fill="#1c7cf2" /><circle cx="12" cy="31" r="3.300" fill="#e8382c" /><circle cx="12" cy="46" r="3.300" fill="#ef8e12" /></svg><b class="badge">6</b></div>
      <div class="app"><svg viewBox="0 0 62 62"><rect width="62" height="62" rx="14" fill="url(#g-paper)" /><path d="M0 16v-2A14 14 0 0 1 14 0h34a14 14 0 0 1 14 14v2z" fill="url(#g-notes)" /><path d="M0 31h62M0 46h62" stroke="#cdcbc7" stroke-width="1.200" /><path d="M0 18.500h62" stroke="#b9b6b0" stroke-width="1.500" stroke-dasharray="1 1.500" /></svg></div>
      <div class="app"><svg viewBox="0 0 62 62"><rect width="62" height="62" rx="14" fill="url(#g-indigo)" /><path d="M19 17l13-4v33l-13 3z" fill="#fff" /><path d="M34 12h4v25l-2 4-2-4zM40 12h2.500v5H40zM40 19h2.500v4H40zM40 25h2.500v4H40zM20 49.500l4-1-1 4-1.500-1-1.500 1z" fill="#fff" /></svg></div>
      <div class="app"><svg viewBox="0 0 62 62"><rect width="62" height="62" rx="14" fill="url(#g-music)" /><path d="M22 45V17l21-5v28" fill="none" stroke="#fff" stroke-width="3" /><path d="M21 15l23.500-5v8L21 23z" fill="#fff" /><ellipse cx="18" cy="45.500" rx="6" ry="5.300" fill="#fff" /><ellipse cx="39" cy="41.500" rx="6" ry="5.300" fill="#fff" /></svg></div>
      <div class="app"><svg viewBox="0 0 62 62"><rect width="62" height="62" rx="14" fill="url(#g-store)" /><path d="M33.500 14L19 39M16 44l-1.500 3M27 14l19 33M11 38h20M41 38h9" stroke="#fff" stroke-width="4.600" stroke-linecap="round" /></svg></div>
      <div class="app"><svg viewBox="0 0 62 62"><rect width="62" height="62" rx="14" fill="url(#g-prefs)" /><circle cx="31" cy="31" r="26" fill="#3c3c3c" /><circle cx="31" cy="31" r="23" fill="none" stroke="#a4a6a8" stroke-width="3" stroke-dasharray="1.500 1" /><circle cx="31" cy="31" r="19.500" fill="#4b4b4b" stroke="#b5b8ba" stroke-width="2.500" /><circle cx="31" cy="31" r="11" fill="#383838" stroke="#777" stroke-width="1.500" /><path d="M31 31h20M31 31L21 14M31 31L21 48" stroke="#aeb1b3" stroke-width="2.800" /><circle cx="31" cy="31" r="3.500" fill="#555" stroke="#aaa" /></svg></div>
      <div class="app"><svg viewBox="0 0 62 62"><rect width="62" height="62" rx="14" fill="url(#g-books)" /><path d="M30.500 47q-10-7-20.500 0V19q3-4 10-4 8 0 10.500 5zM31.500 47q10-7 20.500 0V19q-3-4-10-4-8 0-10.500 5z" fill="#f7f2ee" /></svg></div>
      <div class="app"><svg viewBox="0 0 62 62"><rect x="-3" y="7" width="40" height="46" rx="10" fill="#7ab24b" transform="rotate(-10 17 30)" /><rect x="-1" y="1" width="50" height="54" rx="12" fill="#f08a62" transform="rotate(-7 24 28)" /><rect x="3" width="59" height="62" rx="14" fill="url(#g-dash)" /><path d="M13 14h8v9h-6z" fill="#e8eefa" /><text x="33" y="48" text-anchor="middle" font-size="46" font-weight="900" font-family="Inter, sans-serif" fill="#dfe9f7">D</text></svg></div>
      <div class="app on"><svg viewBox="0 0 62 62"><rect width="62" height="62" rx="14" fill="url(#g-rim)" /><rect x="3" y="3" width="56" height="56" rx="12" fill="#000" /><rect x="7" y="7" width="48" height="48" rx="6" fill="#16211f" /><path d="M15 7v48M25 7v48M36 7v48M46 7v48M7 17h48M7 27h48M7 37h48M7 47h48" stroke="#48605a" stroke-width=".8" /><path d="M7 35l6-2 2 1 2-24 3 33 2-10 5 2 4-6q3-2 6 5l3 1 3-3 4 3" fill="none" stroke="#6fb8ac" stroke-width="1.500" /></svg></div>
      <div class="app on"><svg viewBox="0 0 62 62"><rect width="62" height="62" rx="14" fill="url(#g-rim)" /><rect x="3" y="3" width="56" height="56" rx="12" fill="#000" /><rect x="7" y="7" width="48" height="48" rx="6" fill="#161d21" /><text x="9" y="22" font-size="14" font-weight="700" font-family="'Liberation Mono', monospace" fill="#20d520">$</text><path d="M20 10h6.500v13H20z" fill="#0d6a10" /></svg></div>
      <div class="app on"><svg viewBox="0 0 62 62"><rect width="62" height="62" rx="14" fill="url(#g-wa)" /><path transform="translate(7 7) scale(2)" fill="#fff" d="M17.472 14.382c-.297-.149-1.758-.867-2.030-.967-.273-.099-.471-.148-.670.150-.197.297-.767.966-.940 1.164-.173.199-.347.223-.644.075-.297-.150-1.255-.463-2.390-1.475-.883-.788-1.480-1.761-1.653-2.059-.173-.297-.018-.458.130-.606.134-.133.298-.347.446-.520.149-.174.198-.298.298-.497.099-.198.050-.371-.025-.520-.075-.149-.669-1.612-.916-2.207-.242-.579-.487-.500-.669-.510-.173-.008-.371-.010-.570-.010-.198 0-.520.074-.792.372-.272.297-1.040 1.016-1.040 2.479 0 1.462 1.065 2.875 1.213 3.074.149.198 2.096 3.200 5.077 4.487.709.306 1.262.489 1.694.625.712.227 1.360.195 1.871.118.571-.085 1.758-.719 2.006-1.413.248-.694.248-1.289.173-1.413-.074-.124-.272-.198-.570-.347m-5.421 7.403h-.004a9.870 9.870 0 01-5.031-1.378l-.361-.214-3.741.982.998-3.648-.235-.374a9.860 9.860 0 01-1.510-5.260c.001-5.450 4.436-9.884 9.888-9.884 2.640 0 5.122 1.030 6.988 2.898a9.825 9.825 0 012.893 6.994c-.003 5.450-4.437 9.884-9.885 9.884m8.413-18.297A11.815 11.815 0 0012.050 0C5.495 0 .160 5.335.157 11.892c0 2.096.547 4.142 1.588 5.945L.057 24l6.305-1.654a11.882 11.882 0 005.683 1.448h.005c6.554 0 11.890-5.335 11.893-11.893a11.821 11.821 0 00-3.480-8.413z" /></svg><b class="badge">3</b></div>
      <div class="app on"><svg viewBox="0 0 62 62"><rect width="62" height="62" rx="14" fill="url(#g-rocket)" /><path d="M10 13q7 0 11 5c16-5 30 2 30 13S37 49 21 44q-5 4-11 4 5-5 3-10-5-7 0-15 1-5-3-10z" fill="#fff" /><ellipse cx="31.500" cy="31" rx="15.500" ry="9.500" fill="#e72a43" /><circle cx="23.500" cy="31" r="2.400" fill="#fff" /><circle cx="31" cy="31" r="2.400" fill="#fff" /><circle cx="38.500" cy="31" r="2.400" fill="#fff" /></svg><b class="badge">1</b></div>
      <div class="app"><svg viewBox="0 0 62 62"><rect width="62" height="62" rx="14" fill="url(#g-discord)" /><path transform="translate(8.200 7) scale(1.900)" fill="#fff" d="M20.317 4.370a19.791 19.791 0 00-4.885-1.515.074.074 0 00-.079.037c-.211.375-.445.865-.608 1.250-1.845-.276-3.680-.276-5.487 0-.164-.393-.406-.874-.618-1.250a.077.077 0 00-.079-.037 19.736 19.736 0 00-4.885 1.515.070.070 0 00-.032.028C.533 9.046-.319 13.580.099 18.058a.082.082 0 00.031.056c2.053 1.508 4.041 2.423 5.993 3.029a.078.078 0 00.084-.028c.462-.630.873-1.295 1.226-1.994a.076.076 0 00-.042-.106c-.653-.248-1.274-.550-1.872-.892a.077.077 0 01-.008-.128c.126-.094.252-.192.372-.291a.074.074 0 01.078-.011c3.928 1.793 8.180 1.793 12.061 0a.074.074 0 01.079.010c.120.099.246.198.373.292a.077.077 0 01-.007.128 12.299 12.299 0 01-1.873.891.077.077 0 00-.041.107c.360.698.772 1.363 1.225 1.993a.076.076 0 00.084.029c1.961-.607 3.950-1.522 6.002-3.029a.077.077 0 00.031-.055c.500-5.177-.838-9.674-3.549-13.660a.061.061 0 00-.031-.029zM8.020 15.331c-1.183 0-2.157-1.086-2.157-2.419 0-1.333.956-2.419 2.157-2.419 1.211 0 2.176 1.095 2.157 2.419 0 1.333-.956 2.419-2.157 2.419zm7.975 0c-1.183 0-2.157-1.086-2.157-2.419 0-1.333.955-2.419 2.157-2.419 1.211 0 2.176 1.095 2.157 2.419 0 1.333-.946 2.419-2.157 2.419Z" /></svg></div>
      <div class="app"><svg viewBox="0 0 62 62"><rect width="62" height="62" rx="14" fill="url(#g-white)" /><circle cx="31" cy="31" r="26.500" fill="url(#g-tele)" /><path d="M14 30.500L43 19q1-.4 1 1l-5 23q-.5 1.500-2 .5l-8-5.500-4 4q-1 .5-1-1l1.500-6L39 23 22 33z" fill="#fff" /></svg></div>
      <div class="app"><svg viewBox="0 0 62 62"><rect width="62" height="62" rx="14" fill="url(#g-twit)" /><path transform="translate(10.500 10.500) scale(1.700)" fill="#fff" d="M23.953 4.570a10 10 0 01-2.825.775 4.958 4.958 0 002.163-2.723c-.951.555-2.005.959-3.127 1.184a4.920 4.920 0 00-8.384 4.482C7.690 8.095 4.067 6.130 1.640 3.162a4.822 4.822 0 00-.666 2.475c0 1.710.870 3.213 2.188 4.096a4.904 4.904 0 01-2.228-.616v.060a4.923 4.923 0 003.946 4.827 4.996 4.996 0 01-2.212.085 4.936 4.936 0 004.604 3.417 9.867 9.867 0 01-6.102 2.105c-.390 0-.779-.023-1.170-.067a13.995 13.995 0 007.557 2.209c9.053 0 13.998-7.496 13.998-13.985 0-.210 0-.420-.015-.630A9.935 9.935 0 0024 4.590z" /></svg></div>
      <div class="app"><svg viewBox="0 0 62 62"><path d="M7 41h46l8 25H-1z" fill="url(#g-cone)" /><path d="M25-1q5-4 9 0l15 46q1 14-19.500 15Q9 59 10 45z" fill="#e7e7ea" /><path d="M25-1q5-4 9 0l3 9q-7 4-15 0z" fill="#ff9500" /><path d="M18 20q11 5 23 0l5 14q-16 7-33 0z" fill="#f07c0c" /><path d="M11.500 46q18 8 36 0l2 8q-18 15-39 0z" fill="#e86a10" opacity=".85" /></svg></div>
      <div class="app"><svg viewBox="0 0 62 62"><path d="M31 3l7-1 24 19c10 9 9 28-3 35-13 8-31 2-36-12l-16 7c-8 2-11-2-7-7l23-23H9c-4 0-5-6 0-7h30l-10-8z" fill="#e87d0d" /><circle cx="42.500" cy="35" r="15" fill="#fff" /><circle cx="42.500" cy="35" r="9.500" fill="#265787" /></svg></div>
      <i class="split a"></i>
      <div class="app"><svg viewBox="0 0 62 62"><circle cx="31" cy="31" r="34.500" fill="#fff" /><path d="M46 21l16 22q-8 18-27 20L20 45z" fill="#f0f0f0" /><rect x="13.500" y="13" width="14" height="18" rx="3" fill="#073042" /><path d="M13.500 20H48v25H17q-3.500 0-3.500-4z" fill="#4285f4" /><path d="M20 20a11 11 0 0 1 22 0z" fill="#3ddc84" /><path d="M24 8l3 4M38 8l-3 4" stroke="#3ddc84" stroke-width="1.200" /><circle cx="26.500" cy="16" r="1" fill="#fff" /><circle cx="35.500" cy="16" r="1" fill="#fff" /><path d="M23 50l8-21 8 21M44 27h3v20q-1.500 4-3 0zM26 41q5 3 10 0" fill="none" stroke="#073042" stroke-width="3" /><circle cx="31" cy="28" r="3" fill="#4285f4" stroke="#073042" stroke-width="2" /></svg></div>
      <div class="app"><svg viewBox="0 0 62 62"><rect width="62" height="62" rx="14" fill="#ecebee" /><rect x="4" y="5" width="54" height="52" rx="9" fill="url(#g-sky)" /><path d="M4 33h54v24H13q-9 0-9-8z" fill="#294c84" /><path d="M4 47q12-5 18 0l8 3v7H13q-9 0-9-8zM5 41h10l4 4H4z" fill="#c9d3d6" /><path d="M5 42h8l3 3H4zM10 54h16v3H12z" fill="#6b625a" /><path d="M33 42h23q0 6 7 17-1 5-6 5H31q-5 0-5-5 7-11 7-17z" fill="#cfd2d4" opacity=".93" /><path d="M40 47l6-2 3 6-6 5-6-2z" fill="#7b8a96" /><rect x="31" y="30" width="27" height="14" rx="3" fill="#141414" /><ellipse cx="44.500" cy="32" rx="13" ry="2.300" fill="#3c3c3c" /></svg></div>
      <div class="app"><svg viewBox="0 0 62 62"><rect width="62" height="62" rx="14" fill="url(#g-clean)" /><path d="M16 12l11 12-7 7L9 19zM38 35l11 10-8 9-10-12z" fill="#fcd94c" /><path d="M27 26l9 8-13 13-7-1-1-7z" fill="#edf4fd" /><path d="M32 11q-2 16 18 21 1-4-3-9zM43 15l4-3 3 3-4 5z" fill="#dfeeff" /></svg></div>
      <i class="split b"></i>
      <div class="app"><svg viewBox="0 0 62 62"><path d="M12-6h25v8H12z" fill="#c7c9ca" /><path d="M7.500 2h6v64h-6z" fill="#111" /><path d="M12 2h42v64H12z" fill="#f3f3f3" /><path d="M14 3h24M14 20h22M14 23h24M22 30h23M22 33h23M22 36h23M22 39h23M14 44h16M14 48h16M14 52h16M14 56h16M14 60h16M34 49h18M34 53h18M34 57h18" stroke="#a8a8a8" stroke-width="1.500" stroke-dasharray="3 .6" /><path d="M13 11h25M13 15h21" stroke="#4d8cab" stroke-width="3" stroke-dasharray="3 .8" /><path d="M36-6l18 10v14q-8 2-16 0z" fill="#e4e4e5" /><path d="M36-6q4 8 2 24l14-10z" fill="#fafafa" /></svg></div>
      <div class="app"><svg viewBox="0 0 62 62"><path d="M4 4l7 54q2 6 20 6.500Q49 64 51 58l7-54z" fill="url(#g-bin)" /><path d="M10 53q20 8 42 0l-1 6q-4 5-20 5.500Q13 64 11 59z" fill="#a3a7a9" opacity=".5" /><ellipse cx="31" cy="4" rx="27" ry="6" fill="#4f556c" stroke="#7f858e" stroke-width="1.500" /></svg></div>
    </footer>
  </div>
</template>

<style>
body {
  background: #152347;
}
</style>

<style scoped>
.desktop {
  position: relative;
  width: 2880px;
  height: 1800px;
  overflow: hidden;
  display: flex;
  flex-direction: column;
  background: linear-gradient(90deg, #1c2b54, #152142 12%, #17244a 88%, #1d2c5a);
  font-family: Inter, 'Liberation Sans', sans-serif;
  color: #fff;
}
.defs {
  position: absolute;
}
svg {
  display: block;
  overflow: visible;
  flex: none;
}
span {
  white-space: nowrap;
}

.menubar {
  position: relative;
  flex: none;
  height: 50px;
  box-sizing: border-box;
  padding: 0 0 2px 38px;
  display: grid;
  grid-template-columns: 67px 236px 84px 88px 100px 128px 150px 106px 132px 84px 138px 266px 46px 55px 68px 70px 72px 86px 70px 70px 67px 71px 67px 68px 87px 62px 59px 138px 100px;
  align-items: center;
  background: #152347;
  border-bottom: 1px solid #000;
}
.menubar::after {
  content: '';
  position: absolute;
  right: 38px;
  bottom: 0;
  width: 57px;
  height: 1px;
  background: repeating-linear-gradient(90deg, #8b91a5 0 4px, transparent 4px 8px);
}
.menubar svg {
  filter: drop-shadow(0 3px 4px rgba(0, 0, 0, 0.3));
}
.menubar svg.apple {
  margin-top: -5px;
}
.menubar svg.up {
  margin-top: -3px;
}
.menu {
  padding-left: 1.500px;
  font-size: 25.400px;
  line-height: 45px;
  height: 46px;
  font-weight: 500;
  letter-spacing: -0.200px;
  color: #e9eaee;
  text-shadow: 0 3px 5px rgba(0, 0, 0, 0.35);
}
.menu.strong {
  font-weight: 700;
  letter-spacing: 0.550px;
}
.menu.small {
  font-size: 21.500px;
  line-height: 48px;
}

.window {
  position: relative;
  flex: none;
  height: 1638px;
  border-radius: 22px;
  overflow: hidden;
  display: flex;
  flex-direction: column;
  background: #3b3b3b;
}
.window::after {
  content: '';
  position: absolute;
  inset: 0;
  border-radius: 22px;
  box-shadow: inset 0 0 0 2px rgba(255, 255, 255, 0.2), inset 0 2px 0 rgba(255, 255, 255, 0.22);
  pointer-events: none;
}

.tabstrip {
  flex: none;
  height: 80px;
  background: #1b1b1b;
  display: flex;
  align-items: flex-start;
  box-shadow: inset 0 -3px 4px rgba(0, 0, 0, 0.25);
}
.lights {
  display: flex;
  gap: 16px;
  margin: 29px 58px 0 42px;
}
.lights i {
  width: 24px;
  height: 24px;
  border-radius: 50%;
}
.red { background: #ff5f57; }
.amber { background: #febc2e; }
.green { background: #28c840; }
.panel {
  margin: 34px 32px 0 0;
}
.tabstrip .rule {
  width: 2px;
  height: 40px;
  margin: 29px 26px 0 0;
  background: #6a6a6a;
}
.dim {
  opacity: 0.55;
  margin: 34px 24px 0 0;
}
.tab {
  position: relative;
  width: 480px;
  height: 64px;
  margin-top: 16px;
  box-sizing: border-box;
  padding: 0 24px 0 26px;
  display: flex;
  align-items: center;
  background: #3b3b3b;
  border-radius: 10px 10px 0 0;
}
.tab::before,
.tab::after {
  content: '';
  position: absolute;
  bottom: 0;
  width: 8px;
  height: 8px;
  background: radial-gradient(circle at 0 0, transparent 7.500px, #3b3b3b 8px);
}
.tab::before { left: -8px; }
.tab::after { right: -8px; transform: scaleX(-1); }
.title {
  flex: 1;
  margin-left: 24.500px;
  margin-top: -1px;
  font-size: 23.500px;
  font-weight: 500;
  letter-spacing: 0;
}
.plus {
  margin: 33px 0 0 21px;
}

.toolbar {
  flex: none;
  height: 68px;
  box-sizing: border-box;
  padding: 8px 0 0 40px;
  display: grid;
  grid-template-columns: 88px 88px 90px 70px 1622px 90px 87px 89px 62px 34px 88px 92px 83px 86px 101px 60px;
  align-items: center;
}
.address {
  width: 1582px;
  height: 60px;
  box-sizing: border-box;
  padding: 0 20px 0 28px;
  border-radius: 8px;
  background: #2a2a2a;
  display: flex;
  align-items: center;
}
.url {
  flex: 1;
  margin-left: 28.500px;
  font-size: 27.400px;
  font-weight: 500;
  letter-spacing: 0.100px;
}
.url em {
  font-style: normal;
  font-weight: 400;
  color: #8f8f8f;
}
.sep {
  width: 2px;
  height: 32px;
  background: #666;
}

.bookmarks {
  flex: none;
  height: 72px;
  padding-left: 28px;
  border-bottom: 2px solid #656565;
  display: grid;
  grid-template-columns:
    48px 84px 48px 104px 48px 126px 48px 96px 48px 100px
    44px 37px 141px 43px 169px 64px 64px 48px 172px 66px 46px 258px
    48px 260px 44px 287px 37px 24px 48px 199px;
  align-items: center;
}
.bookmarks span {
  font-size: 23.400px;
  font-weight: 500;
  line-height: 72px;
  letter-spacing: -0.020px;
}
.bookmarks span.loose {
  letter-spacing: 0.120px;
}
.bookmarks .rule {
  width: 4px;
  height: 32px;
  background: #5c5c5c;
}

.page {
  position: relative;
  flex: 1;
  min-height: 0;
  overflow: hidden;
  display: flex;
  background: #808080;
}
.page::after {
  content: '';
  position: absolute;
  left: 0;
  right: 0;
  bottom: 0;
  height: 66px;
  background: linear-gradient(rgba(0, 0, 0, 0), rgba(0, 0, 0, 0.11));
}
.sheet {
  width: 1180px;
  margin-left: 826px;
  border: solid #000;
  border-width: 0 10px;
  background: #fff;
}
table {
  width: 1180px;
  table-layout: fixed;
  border-collapse: separate;
  border-spacing: 0;
  color: #212529;
  font-size: 31.400px;
  font-kerning: none;
  letter-spacing: -0.350px;
}
.c1 { width: 185px; }
.c2 { width: 309px; }
.c3 { width: 344px; }
th,
td {
  height: 82px;
  box-sizing: border-box;
  padding: 2px 0 0 16px;
  border-bottom: 2px solid #dee2e6;
  text-align: left;
  line-height: 48px;
}
th {
  padding-left: 15px;
  font-weight: 700;
}
tr:nth-child(even) > * {
  background: #f2f2f2;
}
.track {
  width: 30px;
  margin-left: auto;
  background: #fafafa;
  box-shadow: inset 2px 0 0 #e8e8e8;
}
.thumb {
  display: block;
  width: 16px;
  height: 523px;
  margin: 530px 0 0 8px;
  border-radius: 8px;
  background: #c1c1c1;
}
.pointer {
  position: absolute;
  left: 2160px;
  top: 1016px;
  filter: drop-shadow(0 2px 2px rgba(0, 0, 0, 0.4));
}

.dock {
  flex: none;
  height: 98px;
  box-sizing: border-box;
  margin: 4px 62px 0;
  padding: 13px 0 0 3.500px;
  display: flex;
  background: #1c233e;
  border: 2px solid #414963;
  border-radius: 32px;
  box-shadow: 0 0 0 1px #0a0f20, 0 -8px 26px 4px rgba(0, 0, 0, 0.75);
}
.app {
  position: relative;
  flex: none;
  width: 80.930px;
  display: flex;
  justify-content: center;
}
.app svg {
  width: 62px;
  height: 62px;
  filter: drop-shadow(0 1px 1px rgba(0, 0, 0, 0.4));
}
.app.on::after {
  content: '';
  position: absolute;
  top: 71px;
  left: 36.500px;
  width: 8px;
  height: 8px;
  border-radius: 50%;
  background: #a0a7c4;
}
.badge {
  position: absolute;
  top: -7px;
  left: 49.500px;
  width: 28.500px;
  height: 28.500px;
  border-radius: 50%;
  background: #ef3c33;
  font-size: 16px;
  font-weight: 400;
  line-height: 28px;
  text-align: center;
}
.split {
  flex: none;
  height: 70px;
  margin-top: -1px;
  width: 2px;
  background: #4e566f;
}
.split.a { margin-left: 18px; margin-right: 15.500px; }
.split.b { margin-left: 19.500px; margin-right: 16px; }
</style>
